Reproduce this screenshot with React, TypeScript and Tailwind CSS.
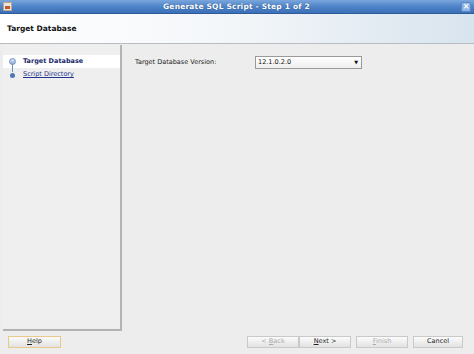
import React from "react";

function TitleBar() {
  return (
    <div className="h-[14px] flex items-center justify-between px-[3px] bg-gradient-to-b from-[#7aa6dc] via-[#4f84c9] to-[#3b6fb6] border-b border-[#2d5a98]">
      {/* java cup icon */}
      <div className="w-[9px] h-[9px] bg-[#e9e4dc] border border-[#b9a98f] flex items-end justify-center">
        <div className="w-[5px] h-[3px] bg-[#c2562f] mb-[1px]" />
      </div>
      <span className="text-[7.5px] font-bold text-white tracking-[0.2px] [text-shadow:0_0_1px_#1d3f73]">
        Generate SQL Script - Step 1 of 2
      </span>
      <div className="w-[10px] h-[10px] rounded-[2px] bg-[#8db4e4] border border-[#5c88c2] flex items-center justify-center text-white text-[8px] font-bold leading-none">
        ×
      </div>
    </div>
  );
}

function Button({
  label,
  mnemonic,
  rest,
  disabled,
  focused,
  width,
}: {
  label?: string;
  mnemonic: string;
  rest: string;
  disabled?: boolean;
  focused?: boolean;
  width: string;
}) {
  return (
    <div
      className={`${width} h-[12px] flex items-center justify-center text-[6.5px] border bg-gradient-to-b from-[#fbfbfb] to-[#e2e2e2] ${
        focused ? "border-[#e8c98a]" : "border-[#c9c9c9]"
      } ${disabled ? "text-[#a9a9a9]" : "text-[#1e1e1e]"}`}
    >
      <span className="whitespace-pre">
        {label}
        <span className="underline">{mnemonic}</span>
        {rest}
      </span>
    </div>
  );
}

export default function App() {
  return (
    <div
      className="w-[474px] h-[354px] bg-[#ededed] flex flex-col overflow-hidden"
      style={{ fontFamily: '"DejaVu Sans", "Liberation Sans", sans-serif' }}
    >
      <TitleBar />
      <div className="h-[30px] flex items-center px-[7px] bg-gradient-to-r from-white via-[#f3f6f9] to-[#d8e4ee] border-b border-[#b9bdc1]">
        <span className="text-[7.5px] font-bold text-[#111]">Target Database</span>
      </div>
      <div className="flex flex-1 pt-[1px]">
        <div className="w-[119px] ml-[3px] mb-[5px] border-r-2 border-b-2 border-[#b3b3b3] bg-[#efefef] flex flex-col pt-[10px]">
          <div className="h-[13px] bg-white flex items-center pl-[6px] relative">
            <div className="w-[7px] h-[7px] rounded-full bg-gradient-to-b from-[#dfe9f6] to-[#8aaad5] border border-[#6e8fbe]" />
            <span className="ml-[7px] text-[6.5px] font-bold text-[#1b2a6b]">Target Database</span>
          </div>
          <div className="h-[14px] flex items-center pl-[7px] relative">
            <div className="absolute left-[9px] top-[-4px] w-[1px] h-[8px] bg-[#6e8fbe]" />
            <div className="w-[5px] h-[5px] rounded-full bg-[#4d77b7]" />
            <span className="ml-[8px] text-[6.5px] text-[#23348c] underline">Script Directory</span>
          </div>
        </div>
        <div className="flex-1 pl-[13px] pt-[11px]">
          <div className="flex items-center h-[13px]">
            <span className="text-[6.5px] text-[#222] w-[120px]">Target Database Version:</span>
            <div className="w-[107px] h-[13px] border border-[#9a9a9a] bg-gradient-to-b from-white to-[#eeeeee] flex items-center justify-between px-[2px]">
              <span className="text-[6.5px] text-[#111]">12.1.0.2.0</span>
              <span className="text-[5px] text-[#111] leading-none mr-[1px]">▼</span>
            </div>
          </div>
        </div>
      </div>
      <div className="h-[18px] flex items-start px-[8px]">
        <Button mnemonic="H" rest="elp" focused width="w-[53px]" />
        <div className="flex-1" />
        <Button label="< " mnemonic="B" rest="ack" disabled width="w-[52px]" />
        <Button mnemonic="N" rest="ext >" width="w-[52px]" />
        <div className="w-[5px]" />
        <Button mnemonic="F" rest="inish" disabled width="w-[52px]" />
        <div className="w-[5px]" />
        <Button label="Cancel" mnemonic="" rest="" width="w-[50px]" />
        <div className="w-[3px]" />
      </div>
    </div>
  );
}
